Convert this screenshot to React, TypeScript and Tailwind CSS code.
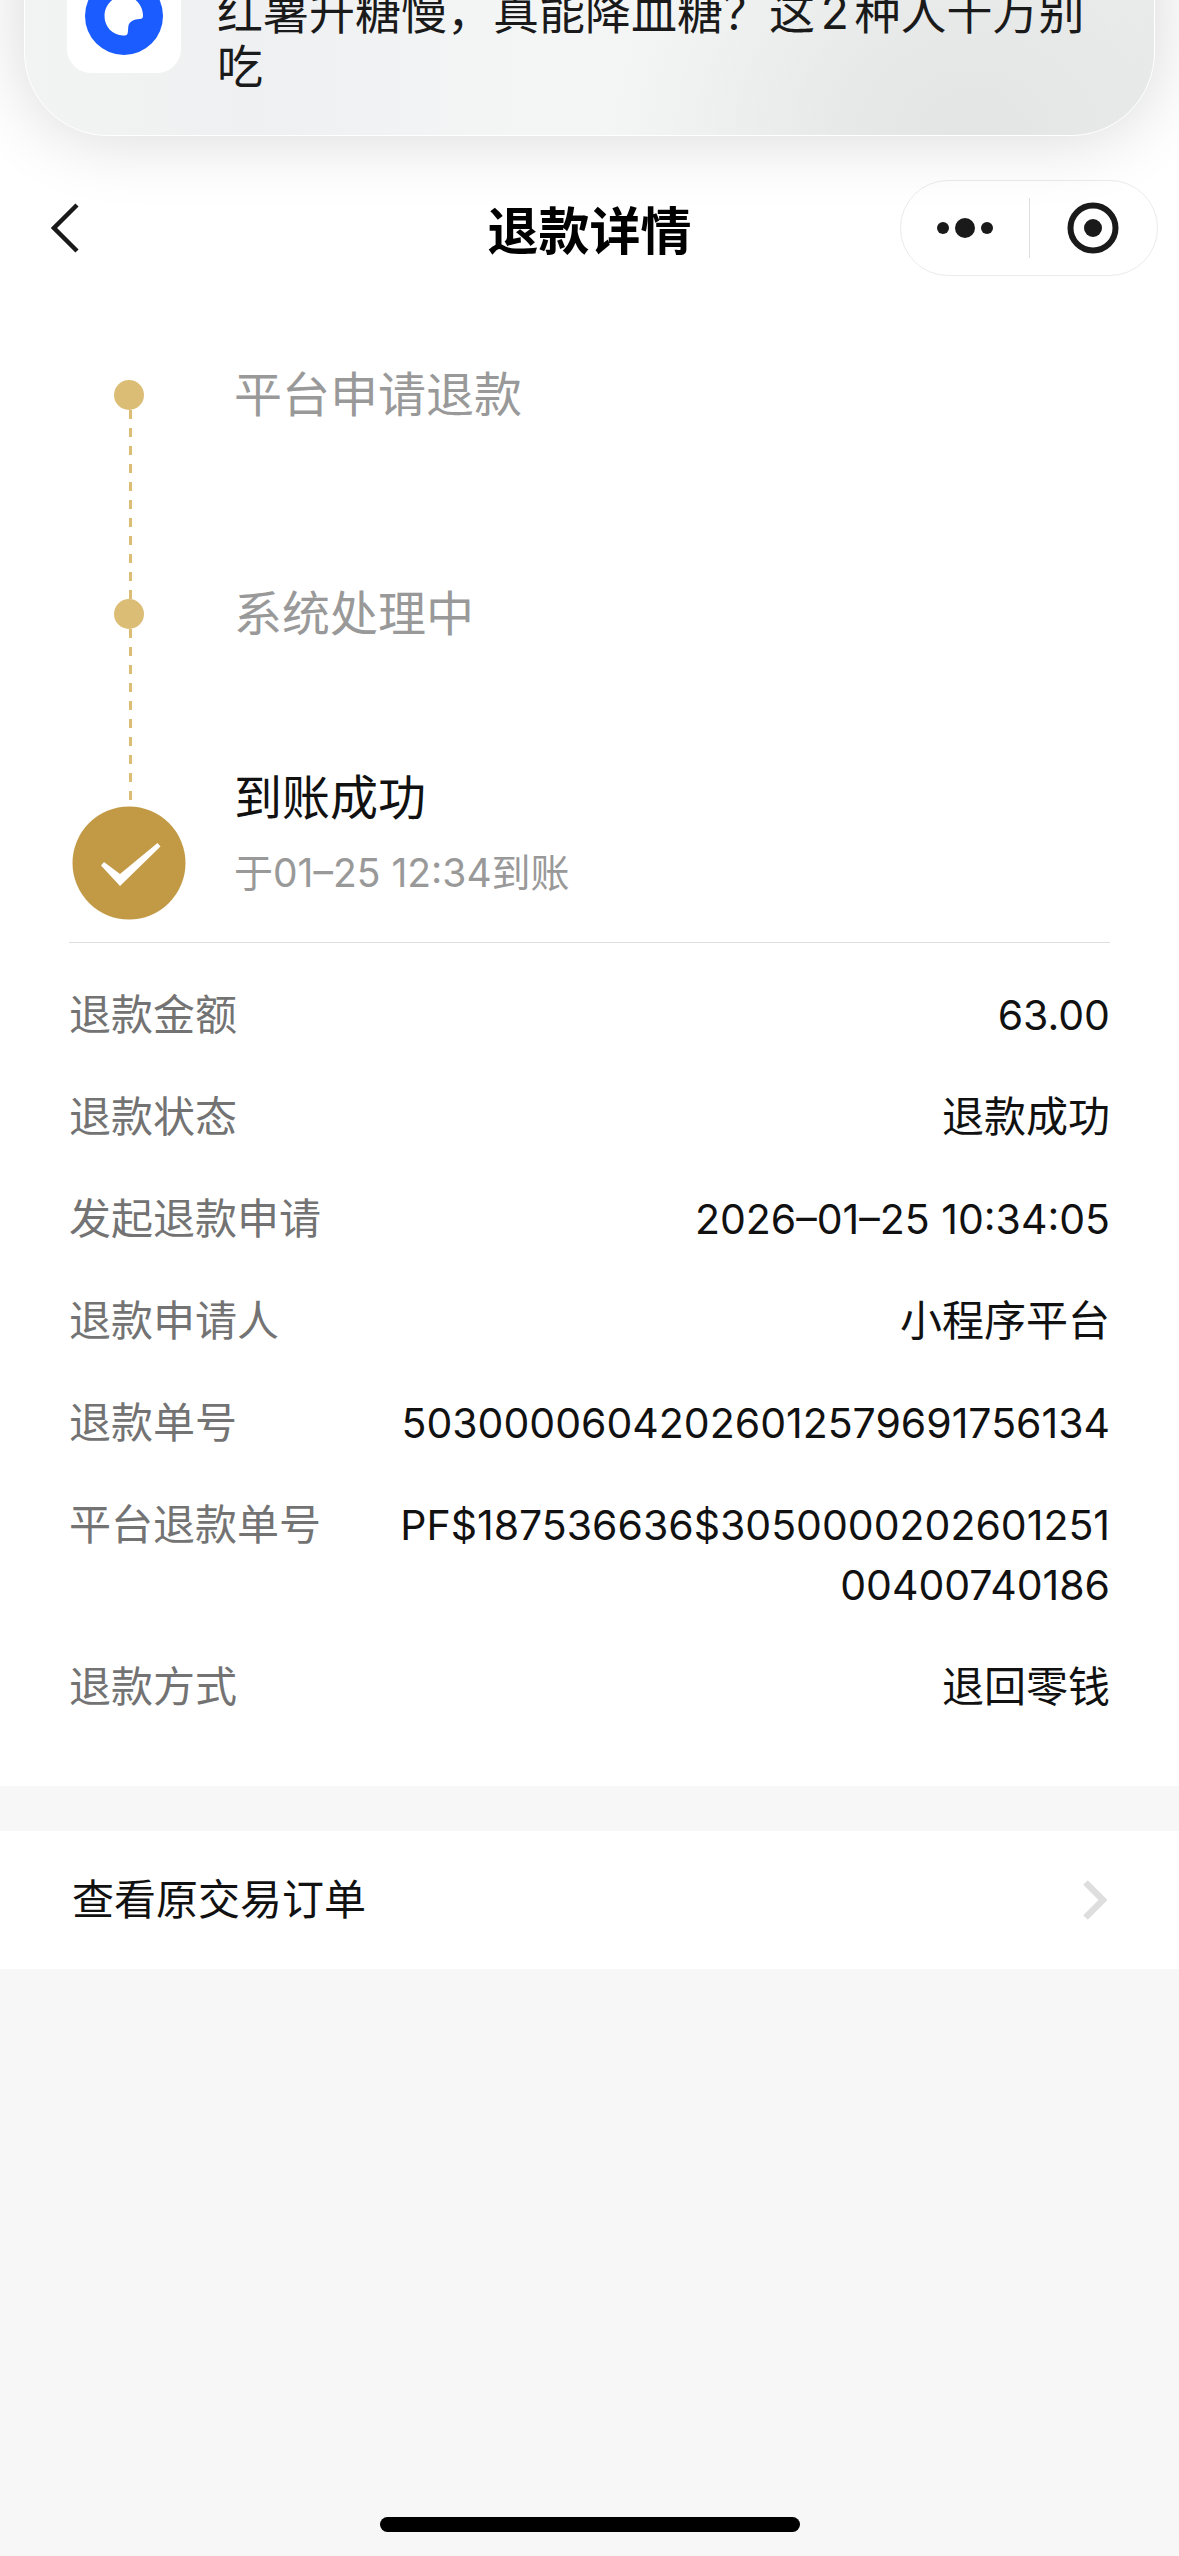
import React from 'react';

const DETAILS = [
  { label: '退款金额', value: '63.00', numeric: true },
  { label: '退款状态', value: '退款成功' },
  { label: '发起退款申请', value: '2026–01–25 10:34:05', numeric: true },
  { label: '退款申请人', value: '小程序平台' },
  { label: '退款单号', value: '50300006042026012579691756134', numeric: true },
  { label: '平台退款单号', value: 'PF$187536636$305000020260125100400740186', numeric: true },
  { label: '退款方式', value: '退回零钱' },
];

const DashedLine: React.FC<{ className: string }> = ({ className }) => (
  <div
    className={`ml-[3px] w-[3px] bg-[repeating-linear-gradient(to_bottom,#dcbd76_0px,#dcbd76_9px,transparent_9px,transparent_18px)] ${className}`}
  />
);

const Dot: React.FC = () => <div className="h-[30px] w-[30px] rounded-full bg-[#dcbd76]" />;

const NotificationBanner: React.FC = () => (
  <aside className="absolute inset-x-6 -top-[120px] flex h-64 items-end gap-9 rounded-[84px] border border-white bg-[#f3f5f5] bg-[radial-gradient(360px_300px_at_84%_100%,#e3e5e5_0%,#e6e8e8_30%,transparent_100%),linear-gradient(to_right,#f2f4f3_0%,#eff0f1_20%,#f4f6f6_45%,#f3f5f5_80%,#ebeded_100%)] px-[42px] pb-[42px] shadow-[0_0_72px_rgba(0,0,0,0.16)]">
    <div className="mb-[20px] flex h-[114px] w-[114px] shrink-0 items-center justify-center rounded-3xl bg-white">
      <svg width="114" height="114" viewBox="0 0 114 114" aria-hidden="true">
        <circle cx="57" cy="57" r="39" fill="#1a5cff" />
        <path
          d="M57 37c11 0 19 9 19 20 0 2-1 2.800-3.500 3-3 .2-5 .500-7 1.700-3 1.500-4 3.500-4.200 6-.3 2.500-.2 5-.8 7-.5 1.600-2 1.800-4.500 1.800C45.500 76 37.500 68 37.500 57S46 37 57 37z"
          fill="#fff"
        />
      </svg>
    </div>
    <p className="text-[46px] leading-[54px] text-[#1a1a1a] [text-autospace:normal]">
      红薯升糖慢，真能降血糖？这2种人千万别吃
    </p>
  </aside>
);

const NavBar: React.FC = () => (
  <header className="grid grid-cols-[1fr_auto_1fr] items-center bg-white px-[21px] pt-45">
    <button type="button" aria-label="返回" className="justify-self-start pl-[30px]">
      <svg width="28" height="50" viewBox="0 0 28 50" fill="none" aria-hidden="true">
        <path d="M26 2L3 25l23 23" stroke="#1a1a1a" strokeWidth="4.5" />
      </svg>
    </button>
    <h1 className="font-['Noto_Sans_CJK_SC',sans-serif] text-[51px] leading-[60px] font-bold text-black">退款详情</h1>
    <div className="flex h-24 w-[258px] items-center justify-self-end rounded-full border border-[#ebebeb]">
      <button type="button" aria-label="更多" className="flex h-full flex-1 items-center justify-center">
        <svg width="58" height="24" viewBox="0 0 58 24" fill="#1a1a1a" aria-hidden="true">
          <circle cx="7" cy="12" r="6" />
          <circle cx="29" cy="12" r="10" />
          <circle cx="51" cy="12" r="6" />
        </svg>
      </button>
      <span className="h-15 w-px bg-[#dedede]" />
      <button type="button" aria-label="关闭" className="flex h-full flex-1 items-center justify-center">
        <svg width="52" height="52" viewBox="0 0 52 52" fill="none" aria-hidden="true">
          <circle cx="26" cy="26" r="22.5" stroke="#1a1a1a" strokeWidth="6" />
          <circle cx="26" cy="26" r="9" fill="#1a1a1a" />
        </svg>
      </button>
    </div>
  </header>
);

const Progress: React.FC = () => (
  <ol className="pt-26">
    <li className="flex gap-[45px]">
      <div className="flex w-[120px] flex-col items-center">
        <Dot />
        <DashedLine className="h-[189px]" />
      </div>
      <p className="text-[48px] leading-[30px] text-[#999]">平台申请退款</p>
    </li>
    <li className="flex gap-[45px]">
      <div className="flex w-[120px] flex-col items-center pb-[6px]">
        <Dot />
        <DashedLine className="h-[171px]" />
      </div>
      <p className="text-[48px] leading-[30px] text-[#999]">系统处理中</p>
    </li>
    <li className="flex gap-[45px]">
      <div className="flex w-[120px] flex-col items-center">
        <svg width="114" height="114" viewBox="0 0 114 114" aria-hidden="true">
          <circle cx="57" cy="57" r="56.5" fill="#c29a46" />
          <path d="M29 59.500l3-3.500 16 12L85.500 37l3 3.500L48 80z" fill="#fff" />
        </svg>
      </div>
      <div className="-mt-[38px] flex flex-col gap-[18px]">
        <p className="text-[48px] leading-[60px] text-[#111]">到账成功</p>
        <p className="text-[39px] leading-[54px] text-[#999]">于01–25 12:34到账</p>
      </div>
    </li>
  </ol>
);

const App: React.FC = () => {
  return (
    <div className="relative flex min-h-screen flex-col overflow-hidden bg-[#f7f7f7] font-['Inter','Noto_Sans_CJK_SC',sans-serif]">
      <NavBar />
      <NotificationBanner />

      <main>
        <section className="bg-white px-[69px] pb-[69px]">
          <Progress />
          <dl className="mt-[22px] flex flex-col gap-[42px] border-t border-[#dedede] pt-[42px]">
            {DETAILS.map((item) => (
              <div key={item.label} className="flex">
                <dt className="w-[310px] shrink-0 text-[42px] leading-[60px] text-[#737373]">{item.label}</dt>
                <dd
                  className={`flex-1 text-right leading-[60px] break-all text-[#111] ${
                    item.numeric ? 'text-[41px]' : 'text-[42px]'
                  }`}
                >
                  {item.value}
                </dd>
              </div>
            ))}
          </dl>
        </section>

        <a href="#order" className="mt-[45px] flex h-[138px] items-center justify-between bg-white px-[72px]">
          <span className="text-[42px] leading-[60px] text-[#111]">查看原交易订单</span>
          <svg width="24" height="40" viewBox="0 0 24 40" fill="none" aria-hidden="true">
            <path d="M2.500 2.500L20 20 2.500 37.500" stroke="#dedede" strokeWidth="6.500" />
          </svg>
        </a>
      </main>

      <div className="mx-auto mt-auto mb-6 h-[15px] w-[420px] rounded-full bg-black" />
    </div>
  );
};

export default App;
